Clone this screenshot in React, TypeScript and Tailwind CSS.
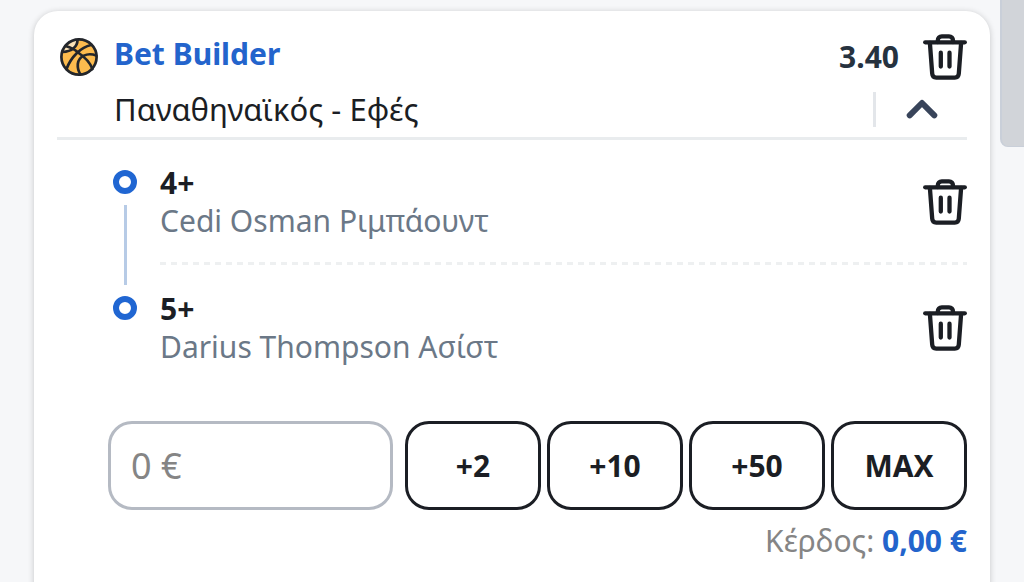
import React, { useState } from "react";

type Leg = { id: number; pick: string; market: string };

const initialLegs: Leg[] = [
  { id: 1, pick: "4+", market: "Cedi Osman Ριμπάουντ" },
  { id: 2, pick: "5+", market: "Darius Thompson Ασίστ" },
];

const stakes = ["+2", "+10", "+50", "MAX"];

function TrashIcon() {
  return (
    <svg
      viewBox="0 0 44 46"
      className="h-[46px] w-11"
      fill="none"
      stroke="currentColor"
      strokeWidth="4.300"
      strokeLinecap="round"
      strokeLinejoin="round"
      aria-hidden="true"
    >
      <path d="M2.200 8.300H41.800" />
      <path d="M14.800 8V6.400C14.800 4 16.400 2.300 18.800 2.300H26C28.400 2.300 30 4 30 6.400V8" />
      <path d="M6.900 9L9.200 39.600C9.400 42.100 11 43.600 13.200 43.600H31.800C34 43.600 35.600 42.100 35.800 39.600L38.100 9" />
      <path d="M17.800 18.700V32.500M26.500 18.700V32.500" />
    </svg>
  );
}

function BasketballIcon() {
  return (
    <svg viewBox="0 0 40 40" className="size-10" fill="none" aria-hidden="true">
      <circle cx="20" cy="20" r="17.600" fill="#fcbb4e" />
      <path d="M4 14C6 8 11 3.500 18 3C18 9 12 14 4 15Z" fill="#fbe3b8" />
      <g stroke="#23262b" strokeWidth="2.700" strokeLinecap="round">
        <circle cx="20" cy="20" r="17.600" />
        <path d="M6.500 9C12 10.500 16 12.500 19 15.500C25 19.500 31 25.500 33.500 32" />
        <path d="M18.500 3C18.500 9.500 13 14.500 3.500 15" />
        <path d="M32 8C22 10 12 20 7.500 32" />
        <path d="M37.300 18.500C28 15 19.500 19.500 18.800 27C18.500 31 19.500 34.500 21.500 37.300" />
      </g>
    </svg>
  );
}

function TrashButton({ label, onClick }: { label: string; onClick?: () => void }) {
  return (
    <button type="button" aria-label={label} onClick={onClick} className="shrink-0 text-[#1b1e24]">
      <TrashIcon />
    </button>
  );
}

export default function App() {
  const [legs, setLegs] = useState(initialLegs);
  const [open, setOpen] = useState(true);
  const [stake, setStake] = useState("");

  return (
    <div className="flex h-screen items-start gap-2.5 overflow-hidden bg-[#f6f7f9] pl-[34px] font-['Noto_Sans','Open_Sans',sans-serif] text-[30px] text-[#1b1e24]">
      <main className="mt-[11px] min-h-screen min-w-0 flex-1 rounded-t-3xl bg-white pt-5 pr-[23px] pl-[23px] shadow-[0_1px_6px_rgba(0,0,0,0.2)]">
        <header className="border-b-[3px] border-[#e9ecee]">
          <div className="flex h-[52px] items-center">
            <div className="w-[57px] shrink-0 pl-0.5">
              <BasketballIcon />
            </div>
            <h1 className="flex-1 pb-2 font-bold text-[#2364cc]">Bet Builder</h1>
            <span className="pr-6 pb-0.5 font-bold text-[#26323f]">3.40</span>
            <TrashButton label="Διαγραφή Bet Builder" onClick={() => setLegs([])} />
          </div>
          <div className="flex h-[54px] items-center pb-0.5 pl-[57px]">
            <p className="flex-1 text-[31px]">Παναθηναϊκός - Εφές</p>
            <button
              type="button"
              aria-label="Επιλογές"
              aria-expanded={open}
              onClick={() => setOpen(!open)}
              className="flex h-[35px] w-[94px] items-center justify-center border-l-[3px] border-[#e3e6ea] text-[#38445a]"
            >
              <svg
                viewBox="0 0 32 20"
                className="h-5 w-8"
                fill="none"
                stroke="currentColor"
                strokeWidth="6"
                strokeLinecap="round"
                strokeLinejoin="round"
                aria-hidden="true"
              >
                <path d="M3.700 16.300L16 4L28.300 16.300" />
              </svg>
            </button>
          </div>
        </header>

        {open && (
          <ul className="pt-6 pl-14">
            {legs.map((leg, i) => {
              const last = i === legs.length - 1;
              return (
                <li key={leg.id} className="flex gap-[23px]">
                  <div className="flex flex-col items-center pt-1.5">
                    <span className="size-6 rounded-full border-[6px] border-[#2066d2]" />
                    {!last && <span className="mt-[11px] mb-[5px] w-[3px] flex-1 bg-[#b7cbe6]" />}
                  </div>
                  <div className="min-w-0 flex-1">
                    <div className="flex items-center justify-between">
                      <div className="leading-[38px]">
                        <p className="font-bold">{leg.pick}</p>
                        <p className="text-[#6b7887]">{leg.market}</p>
                      </div>
                      <TrashButton
                        label={`Διαγραφή ${leg.market}`}
                        onClick={() => setLegs(legs.filter((l) => l.id !== leg.id))}
                      />
                    </div>
                    {!last && (
                      <div className="mt-[22px] mb-[25px] h-[3px] bg-[repeating-linear-gradient(90deg,#eef0f1_0_6px,transparent_6px_11px)]" />
                    )}
                  </div>
                </li>
              );
            })}
          </ul>
        )}

        <div className="mt-[55px] flex gap-3 pl-[51px]">
          <input
            type="text"
            inputMode="decimal"
            aria-label="Ποσό"
            placeholder="0 €"
            value={stake}
            onChange={(e) => setStake(e.target.value)}
            className="h-[89px] w-0 min-w-0 flex-1 rounded-3xl border-[3px] border-[#b5bac3] bg-white px-5 text-[36px] placeholder:text-[#858585]"
          />
          <div className="flex gap-1.5">
            {stakes.map((s) => (
              <button
                key={s}
                type="button"
                onClick={() => setStake(s.replace("+", ""))}
                className="h-[89px] w-[136px] rounded-3xl border-[3px] border-[#1b1e24] font-bold"
              >
                {s}
              </button>
            ))}
          </div>
        </div>

        <p className="mt-2 text-right text-[#858585]">
          Κέρδος: <strong className="font-bold text-[#2364cc]">0,00 €</strong>
        </p>
      </main>
      <div className="h-[147px] w-6 shrink-0 rounded-bl-lg border-b border-l-2 border-[#c9cfd9] bg-[#d1d4d9]" />
    </div>
  );
}
